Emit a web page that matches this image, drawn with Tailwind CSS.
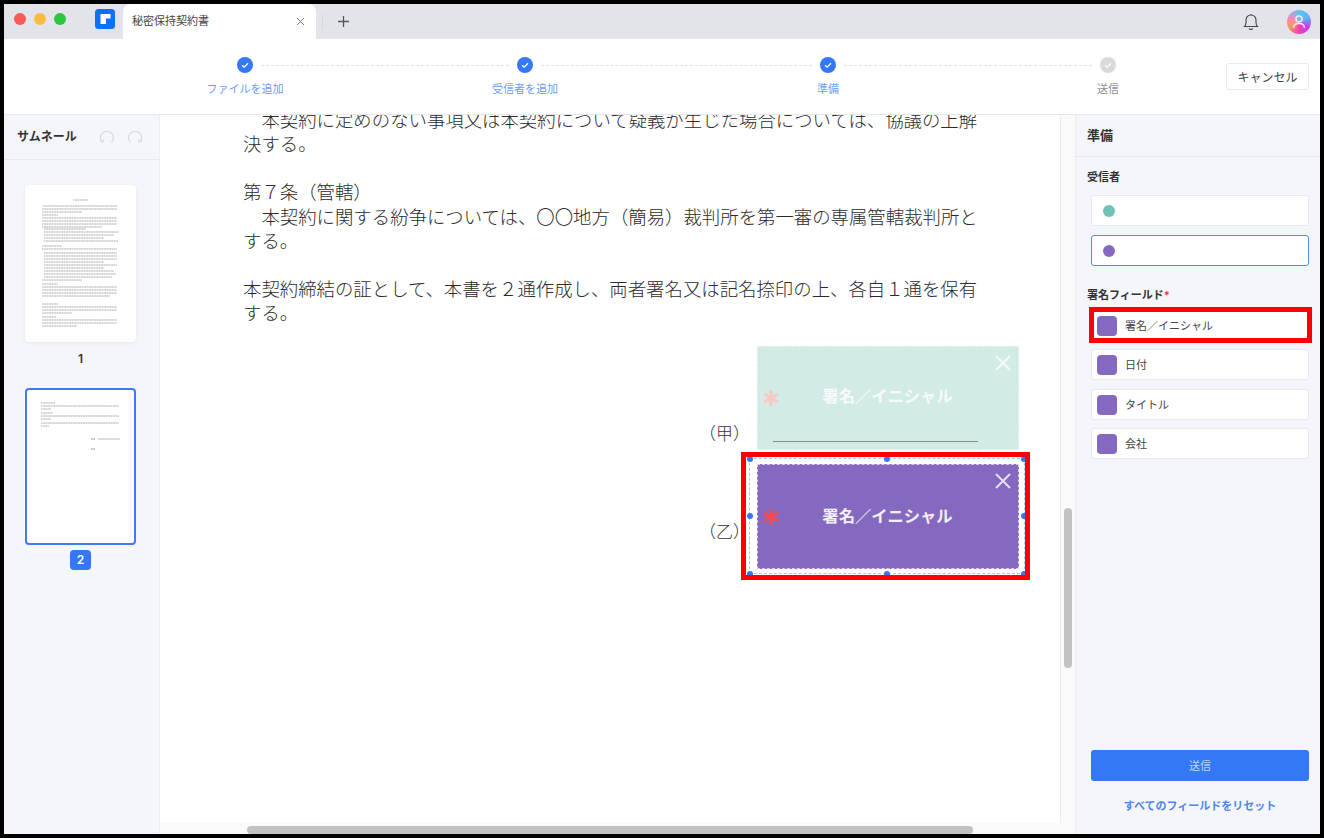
<!DOCTYPE html>
<html lang="ja">
<head>
  <meta charset="utf-8"/>
  <meta name="viewport" content="width=device-width,initial-scale=1.0"/>
  <title>秘密保持契約書</title>
  <script src="https://cdn.jsdelivr.net/npm/@tailwindcss/browser@4"></script>
  <style>
    body { font-family: Inter, "Noto Sans CJK JP", sans-serif; }
  </style>
</head>
<body class="bg-black">
  <div class="w-[1324px] h-[838px] p-[4px] overflow-hidden">
    <div class="w-[1316px] h-[830px] bg-white flex flex-col overflow-hidden">

      <!-- tab bar -->
      <div class="h-[35px] shrink-0 bg-[#e3e4e9] flex items-center relative">
        <div class="flex items-center gap-[8px] ml-[10px] w-[81px] -mt-[5px]">
          <span class="w-[12px] h-[12px] rounded-full bg-[#fb5b57]"></span>
          <span class="w-[12px] h-[12px] rounded-full bg-[#fdbb3e]"></span>
          <span class="w-[12px] h-[12px] rounded-full bg-[#2cc640]"></span>
        </div>
        <svg class="-mt-[5px] shrink-0" width="20" height="20" viewBox="0 0 20 20"><rect width="20" height="20" rx="3.5" fill="#0f6ffb"/><path d="M5.500 5h10v4.500H11V15H5.500z" fill="#fff"/></svg>
        <div class="ml-[8px] w-[193px] h-[35px] bg-white rounded-t-[7px] flex items-center justify-between pl-[9px] pr-[11px]">
          <span class="text-[11px] text-[#444]">秘密保持契約書</span>
          <svg width="9" height="9" viewBox="0 0 9 9" stroke="#777" fill="none"><path d="M1 1l7 7M8 1L1 8"/></svg>
        </div>
        <div class="ml-[6px] w-px h-[16px] bg-[#d6d7dc]"></div>
        <svg class="ml-[15px]" width="11" height="11" viewBox="0 0 11 11" stroke="#555" stroke-width="1.3" fill="none"><path d="M5.5 0v11M0 5.5h11"/></svg>
        <div class="ml-auto mr-[9px] flex items-center gap-[28px]">
          <svg width="16" height="18" viewBox="0 0 16 18" fill="none" stroke="#444" stroke-width="1.1"><path d="M1.5 13.5c1-1 1.5-2 1.5-4V7a5 5 0 0 1 10 0v2.500c0 2 .5 3 1.500 4z"/><path d="M6.200 15.500c.5 1.200 3.100 1.200 3.600 0M8 1v1"/></svg>
          <div class="w-[24px] h-[24px] rounded-full bg-[conic-gradient(#58c8f2,#58b8f2,#c83cf0,#f23fb0,#f59a5a,#f58ac0,#58c8f2)] flex items-center justify-center">
            <svg width="16" height="16" viewBox="0 0 16 16" fill="none" stroke="#fde6f4" stroke-width="1.500"><circle cx="8" cy="5" r="3"/><path d="M2.500 14c0-3 2.500-4.500 5.500-4.500s5.500 1.500 5.500 4.500"/></svg>
          </div>
        </div>
      </div>

      <!-- steps -->
      <div class="h-[76px] shrink-0 border-b border-[#e6e7ec] flex relative">
        <div class="flex ml-[233px] mt-[18px] h-[40px]">
          <div class="w-[16px] flex flex-col items-center gap-[8px]">
            <svg class="shrink-0" width="16" height="16" viewBox="0 0 16 16"><circle cx="8" cy="8" r="8" fill="#3578f6"/><path d="M5 8.200l2.200 2L11 6.200" stroke="#fff" stroke-width="1.300" fill="none"/></svg>
            <span class="text-[11px] leading-[16px] text-[#6c9ef6] whitespace-nowrap">ファイルを追加</span>
          </div>
          <div class="w-[248px] h-0 mx-[8px] mt-[8px] border-t border-dashed border-[#dfe0e4]"></div>
          <div class="w-[16px] flex flex-col items-center gap-[8px]">
            <svg class="shrink-0" width="16" height="16" viewBox="0 0 16 16"><circle cx="8" cy="8" r="8" fill="#3578f6"/><path d="M5 8.200l2.200 2L11 6.200" stroke="#fff" stroke-width="1.300" fill="none"/></svg>
            <span class="text-[11px] leading-[16px] text-[#6c9ef6] whitespace-nowrap">受信者を追加</span>
          </div>
          <div class="w-[271px] h-0 mx-[8px] mt-[8px] border-t border-dashed border-[#dfe0e4]"></div>
          <div class="w-[16px] flex flex-col items-center gap-[8px]">
            <svg class="shrink-0" width="16" height="16" viewBox="0 0 16 16"><circle cx="8" cy="8" r="8" fill="#3578f6"/><path d="M5 8.200l2.200 2L11 6.200" stroke="#fff" stroke-width="1.300" fill="none"/></svg>
            <span class="text-[11px] leading-[16px] text-[#6c9ef6] whitespace-nowrap">準備</span>
          </div>
          <div class="w-[248px] h-0 mx-[8px] mt-[8px] border-t border-dashed border-[#dfe0e4]"></div>
          <div class="w-[16px] flex flex-col items-center gap-[8px]">
            <svg class="shrink-0" width="16" height="16" viewBox="0 0 16 16"><circle cx="8" cy="8" r="8" fill="#d9dadd"/><path d="M5 8.200l2.200 2L11 6.200" stroke="#fff" stroke-width="1.300" fill="none"/></svg>
            <span class="text-[11px] leading-[16px] text-[#8b8d93] whitespace-nowrap">送信</span>
          </div>
        </div>
        <button class="ml-auto mr-[11px] mt-[24px] w-[83px] h-[27px] pt-[2px] rounded-[3px] border border-[#e9eaee] bg-white text-[12px] text-[#444]">キャンセル</button>
      </div>

      <div class="flex flex-1 min-h-0">
        <!-- thumbnails -->
        <div class="w-[156px] shrink-0 bg-[#f5f6fb] border-r border-[#eceef2] flex flex-col">
          <div class="h-[45px] shrink-0 border-b border-[#e8e9ee] flex items-center pl-[13px]">
            <span class="text-[12px] font-bold text-[#333]">サムネール</span>
            <svg class="ml-[22px]" width="16" height="14" viewBox="0 0 16 14" fill="none" stroke="#d6d8df" stroke-width="1.200"><path d="M3.500 12C1.500 10.500 1 8.800 1.500 6.500 2.300 3.500 5 1.500 8 1.500s5.500 2 6.300 5c.5 2.300 0 4-2 5.500"/><path d="M1 10l2.500 2 1.500-2.500"/></svg>
            <svg class="ml-[12px]" width="16" height="14" viewBox="0 0 16 14" fill="none" stroke="#d6d8df" stroke-width="1.200"><path d="M12.500 12c2-1.500 2.500-3.200 2-5.500C13.700 3.500 11 1.500 8 1.500s-5.500 2-6.300 5c-.5 2.300 0 4 2 5.500"/><path d="M15 10l-2.500 2L11 9.500"/></svg>
          </div>
          <div class="flex flex-col items-center pt-[25px] pr-[2px]">
            <div class="w-[111px] h-[157px] bg-white rounded-[4px] shadow-[0_1px_4px_rgba(0,0,0,0.06)]">
              <svg width="111" height="157" viewBox="0 0 111 157" fill="none" stroke="#8a8a8a" stroke-width=".7" stroke-dasharray="1.600 .6 2.400 .4">
                <path d="M48 15h15M18 21h74M17 24h75M17 27h40"/>
                <path d="M17 30h16M17 33h75M17 36h75M17 39h75M17 42h60M19 44h42M19 47h75M19 50h70M19 53h60M19 56h74"/>
                <path d="M17 61h20M17 64h75M19 68h73M19 71h73M19 74h73M19 77h60M19 80h73M19 83h60M19 86h70M19 89h72M19 92h68M17 95h40"/>
                <path d="M17 99h16M17 102h75M17 105h75M17 108h75M17 111h68"/>
                <path d="M17 119h16M17 122h75M17 125h75M17 128h30"/>
                <path d="M17 132h14M17 135h75M17 138h75M17 141h35"/>
              </svg>
            </div>
            <span class="mt-[8px] text-[12px] leading-[18px] font-semibold text-[#333]">1</span>
            <div class="mt-[20px] w-[111px] h-[157px] bg-white rounded-[4px] border-2 border-[#3e7df0]">
              <svg width="107" height="153" viewBox="0 0 107 153" fill="none" stroke="#8a8a8a" stroke-width=".7" stroke-dasharray="1.600 .6 2.400 .4">
                <path d="M14 13h14M14 16h78M14 19h10M14 23h12M14 26h78M14 29h10M14 33h78M14 36h8"/>
                <path d="M64 49h4" stroke-width="1.200"/><path d="M71 49h22" stroke-dasharray="none" stroke-width=".6"/>
                <path d="M64 59h4" stroke-width="1"/>
              </svg>
            </div>
            <span class="mt-[5px] w-[21px] h-[20px] rounded-[4px] bg-[#3578f6] text-white text-[12px] font-semibold flex items-center justify-center">2</span>
          </div>
        </div>

        <!-- document -->
        <div class="w-[915px] shrink-0 flex flex-col bg-[#fafafb]">
          <div class="flex flex-1 min-h-0">
            <div class="w-[901px] shrink-0 bg-white border-r border-[#eeeef0] relative overflow-hidden">
              <div class="pl-[83px] -mt-[7px] w-[822px] text-[18.400px] leading-[24.150px] text-[#2b2b2b] font-light">
                <p>　本契約に定めのない事項又は本契約について疑義が生じた場合については、協議の上解決する。</p>
                <p class="mt-[24.150px]">第７条（管轄）</p>
                <p>　本契約に関する紛争については、〇〇地方（簡易）裁判所を第一審の専属管轄裁判所とする。</p>
                <p class="mt-[24.150px]">本契約締結の証として、本書を２通作成し、両者署名又は記名捺印の上、各自１通を保有する。</p>
              </div>

              <span class="absolute left-[539px] top-[307px] text-[17px] leading-[24px] text-[#333] font-light whitespace-nowrap">（甲）</span>
              <span class="absolute left-[539px] top-[405px] text-[17px] leading-[24px] text-[#333] font-light whitespace-nowrap">（乙）</span>

              <!-- field 甲 -->
              <div class="absolute left-[596.500px] top-[231px] w-[262px] h-[104px] bg-[#d2ebe7] border border-dashed border-[#e3f3f0] flex items-center justify-center">
                <svg class="absolute left-[4px] top-[42px]" width="18" height="18" viewBox="0 0 18 18" stroke="#fbc6c6" stroke-width="3"><path d="M9 1v16M2 5l14 8M16 5L2 13"/></svg>
                <span class="text-[16.300px] font-semibold text-white/80 -mt-[3px]">署名／イニシャル</span>
                <svg class="absolute right-[7px] top-[8px]" width="16" height="16" viewBox="0 0 16 16" stroke="#f4fbfa" stroke-width="2"><path d="M1 1l14 14M15 1L1 15"/></svg>
                <div class="absolute left-[15px] top-[94px] w-[205px] h-px bg-[#7f8f8c]"></div>
              </div>

              <!-- field 乙, selected -->
              <div class="absolute left-[589px] top-[343px] w-[276px] h-[116px] bg-white border-[1.500px] border-dashed border-[#a3c5fb]"></div>
              <div class="absolute left-[596.500px] top-[349px] w-[262px] h-[105px] bg-[#8568c0] border border-dashed border-[#d6cdea] flex items-center justify-center">
                <svg class="absolute left-[4px] top-[43px]" width="18" height="18" viewBox="0 0 18 18" stroke="#f74b4b" stroke-width="3"><path d="M9 1v16M2 5l14 8M16 5L2 13"/></svg>
                <span class="text-[16.300px] font-semibold text-white/90">署名／イニシャル</span>
                <svg class="absolute right-[7px] top-[8px]" width="16" height="16" viewBox="0 0 16 16" stroke="#e6e0f2" stroke-width="2"><path d="M1 1l14 14M15 1L1 15"/></svg>
              </div>
              <span class="absolute left-[587px] top-[341px] w-[6px] h-[6px] rounded-full bg-[#3578f6]"></span>
              <span class="absolute left-[724px] top-[341px] w-[6px] h-[6px] rounded-full bg-[#3578f6]"></span>
              <span class="absolute left-[861px] top-[341px] w-[6px] h-[6px] rounded-full bg-[#3578f6]"></span>
              <span class="absolute left-[587px] top-[398px] w-[6px] h-[6px] rounded-full bg-[#3578f6]"></span>
              <span class="absolute left-[861px] top-[398px] w-[6px] h-[6px] rounded-full bg-[#3578f6]"></span>
              <span class="absolute left-[587px] top-[456px] w-[6px] h-[6px] rounded-full bg-[#3578f6]"></span>
              <span class="absolute left-[724px] top-[456px] w-[6px] h-[6px] rounded-full bg-[#3578f6]"></span>
              <span class="absolute left-[861px] top-[456px] w-[6px] h-[6px] rounded-full bg-[#3578f6]"></span>

              <!-- annotation -->
              <div class="absolute left-[581px] top-[337px] w-[289px] h-[128px] border-[5px] border-[#ff0000]"></div>
            </div>
            <div class="flex-1 pl-[3px] pt-[393px]">
              <div class="w-[8px] h-[160px] rounded-full bg-[#c2c2c4]"></div>
            </div>
          </div>
          <div class="h-[11px] shrink-0 pt-[3px] pl-[87px]">
            <div class="w-[726px] h-[8px] rounded-full bg-[#c2c2c4]"></div>
          </div>
        </div>

        <!-- right panel -->
        <div class="flex-1 bg-[#f5f6fb] border-l border-[#eceef2] flex flex-col relative">
          <div class="h-[42px] shrink-0 border-b border-[#e8e9ee] flex items-center pl-[11px]">
            <span class="text-[13px] font-bold text-[#333]">準備</span>
          </div>
          <div class="pl-[15px] pr-[11px] pt-[12px] flex flex-col flex-1">
            <p class="-ml-[4px] text-[11px] leading-[16px] font-bold text-[#333]">受信者</p>
            <div class="mt-[10px] h-[31px] rounded-[3px] bg-white border border-[#e9eaef] flex items-center pl-[11px]">
              <span class="w-[12px] h-[12px] rounded-full bg-[#6fc2b4]"></span>
            </div>
            <div class="mt-[9px] h-[31px] rounded-[3px] bg-white border border-[#4f8bf5] flex items-center pl-[11px]">
              <span class="w-[12px] h-[12px] rounded-full bg-[#8568c0]"></span>
            </div>
            <p class="-ml-[4px] mt-[21px] text-[11px] leading-[16px] font-bold text-[#333]">署名フィールド<span class="text-[#f33]">*</span></p>
            <div class="mt-[7px] h-[31px] rounded-[3px] bg-white border border-[#e9eaef] flex items-center pl-[5px] gap-[8px]">
              <span class="w-[20px] h-[20px] rounded-[4px] bg-[#8568c0]"></span><span class="text-[11px] pt-[1px] text-[#444]">署名／イニシャル</span>
            </div>
            <div class="mt-[8px] h-[31px] rounded-[3px] bg-white border border-[#e9eaef] flex items-center pl-[5px] gap-[8px]">
              <span class="w-[20px] h-[20px] rounded-[4px] bg-[#8568c0]"></span><span class="text-[11px] pt-[1px] text-[#444]">日付</span>
            </div>
            <div class="mt-[9px] h-[31px] rounded-[3px] bg-white border border-[#e9eaef] flex items-center pl-[5px] gap-[8px]">
              <span class="w-[20px] h-[20px] rounded-[4px] bg-[#8568c0]"></span><span class="text-[11px] pt-[1px] text-[#444]">タイトル</span>
            </div>
            <div class="mt-[8px] h-[31px] rounded-[3px] bg-white border border-[#e9eaef] flex items-center pl-[5px] gap-[8px]">
              <span class="w-[20px] h-[20px] rounded-[4px] bg-[#8568c0]"></span><span class="text-[11px] pt-[1px] text-[#444]">会社</span>
            </div>
            <button class="mt-auto h-[31px] pt-[2px] rounded-[3px] bg-[#3578f6] text-[11px] text-white/70">送信</button>
            <p class="mt-[17px] mb-[20px] text-center text-[11px] leading-[16px] font-bold text-[#4f86ee]">すべてのフィールドをリセット</p>
          </div>
          <!-- annotation -->
          <div class="absolute left-[13px] top-[192px] w-[223px] h-[36px] border-[5px] border-[#ff0000]"></div>
        </div>
      </div>
    </div>
  </div>
</body>
</html>
